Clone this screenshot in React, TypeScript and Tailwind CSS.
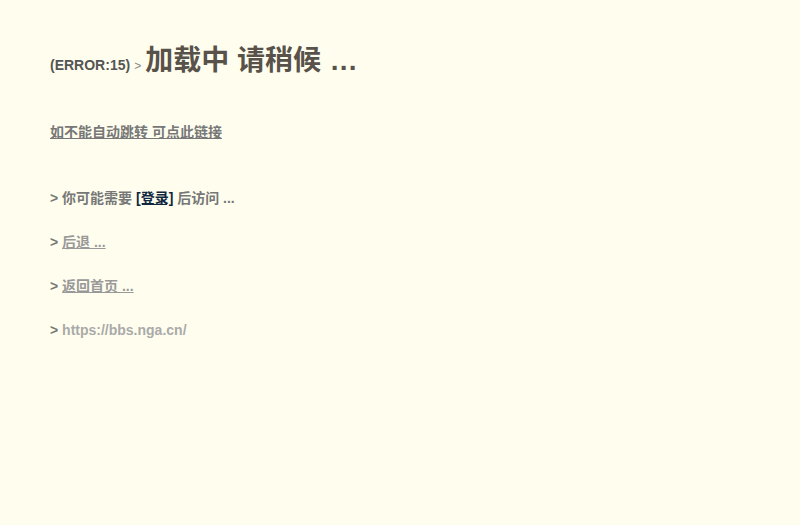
import React from 'react';

const font = "font-['Liberation_Sans','Noto_Sans_CJK_SC',sans-serif]";

export default function App() {
  return (
    <div className={`min-h-[525px] w-full bg-[#fffeee] px-[50px] pt-[40px] ${font}`}>
      <div className="flex items-baseline">
        <span className="text-[14px] font-bold text-[#555]">(ERROR:15)</span>
        <span className="ml-[4px] text-[12px] text-[#888]">&gt;</span>
        <span className="ml-[4px] text-[28px] font-bold text-[#58524a]">
          加载中 请稍候 <span className="ml-[2px] tracking-[1.3px]">...</span>
        </span>
      </div>

      <div className="mt-[38px]">
        <a href="#" className="text-[14px] font-bold text-[#777] underline">
          如不能自动跳转 可点此链接
        </a>
      </div>

      <div className="mt-[45px] flex flex-col gap-[26px] text-[14px] font-bold leading-[18px]">
        <div className="text-[#777]">
          &gt; 你可能需要{' '}
          <a href="#" className="text-[#10273f] underline">
            [登录]
          </a>{' '}
          后访问 ...
        </div>
        <div className="text-[#777]">
          &gt;{' '}
          <a href="#" className="text-[#999] underline">
            后退 ...
          </a>
        </div>
        <div className="text-[#777]">
          &gt;{' '}
          <a href="#" className="text-[#999] underline">
            返回首页 ...
          </a>
        </div>
        <div className="text-[#777]">
          &gt; <span className="text-[#aaa]">https://bbs.nga.cn/</span>
        </div>
      </div>
    </div>
  );
}
